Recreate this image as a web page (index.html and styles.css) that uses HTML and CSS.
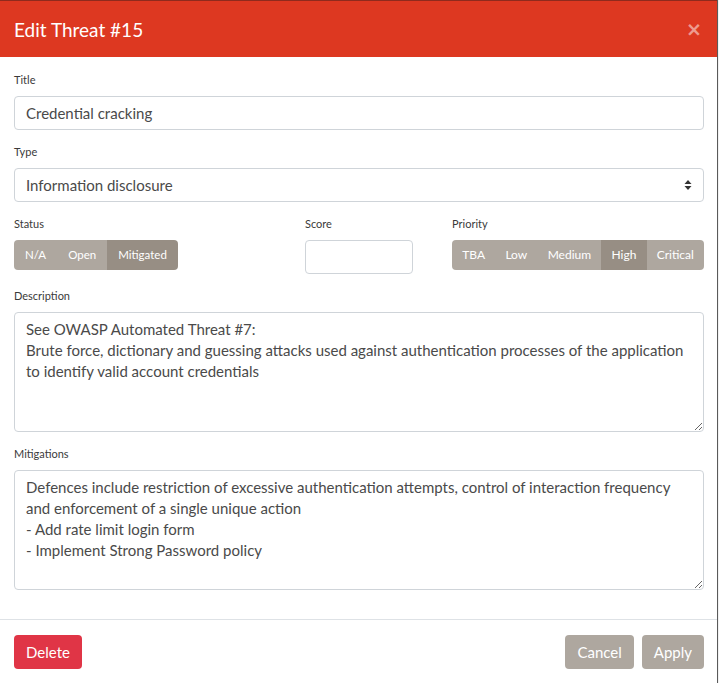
FILE: index.html
```html
<!DOCTYPE html>
<html>
<head>
<meta charset="utf-8">
<link rel="stylesheet" href="styles.css">
</head>
<body>
<div class="modal">
  <div class="modal-header">
    <h5 class="modal-title">Edit Threat #15</h5>
    <button class="close" type="button">&times;</button>
  </div>
  <div class="modal-body">
    <div class="form-group">
      <label class="lbl">Title</label>
      <input class="form-control" type="text" value="Credential cracking">
    </div>
    <div class="form-group">
      <label class="lbl">Type</label>
      <select class="form-control select">
        <option>Information disclosure</option>
      </select>
    </div>
    <div class="form-group row3">
      <div class="col">
        <label class="lbl">Status</label>
        <div class="btn-group">
          <button class="gbtn">N/A</button>
          <button class="gbtn">Open</button>
          <button class="gbtn active">Mitigated</button>
        </div>
      </div>
      <div class="col">
        <label class="lbl">Score</label>
        <input class="form-control score" type="text" value="">
      </div>
      <div class="col">
        <label class="lbl">Priority</label>
        <div class="btn-group wide">
          <button class="gbtn">TBA</button>
          <button class="gbtn">Low</button>
          <button class="gbtn">Medium</button>
          <button class="gbtn active">High</button>
          <button class="gbtn">Critical</button>
        </div>
      </div>
    </div>
    <div class="form-group">
      <label class="lbl">Description</label>
      <textarea class="form-control area">See OWASP Automated Threat #7:
Brute force, dictionary and guessing attacks used against authentication processes of the application to identify valid account credentials</textarea>
    </div>
    <div class="form-group">
      <label class="lbl">Mitigations</label>
      <textarea class="form-control area">Defences include restriction of excessive authentication attempts, control of interaction frequency and enforcement of a single unique action
- Add rate limit login form
- Implement Strong Password policy</textarea>
    </div>
  </div>
  <div class="modal-footer">
    <button class="btn btn-danger">Delete</button>
    <div class="right">
      <button class="btn btn-secondary">Cancel</button>
      <button class="btn btn-secondary">Apply</button>
    </div>
  </div>
</div>
</body>
</html>
```

FILE: styles.css
```css
* { box-sizing: border-box; }
html, body { margin: 0; padding: 0; }
body {
  background: #f1f1f1;
  font-family: Lato, "Open Sans", sans-serif;
  color: #333;
  width: 719px;
  height: 683px;
  overflow: hidden;
}
.modal {
  width: 718px;
  background: #fff;
  border-right: 1px solid #5a5a5a;
}
.modal-header {
  height: 57px;
  background: #dd3821;
  border-top: 1px solid #8f2a1d;
  display: flex;
  align-items: center;
  justify-content: space-between;
  padding: 0 15px 0 14px;
}
.modal-title {
  margin: 0;
  font-size: 19px;
  font-weight: 400;
  color: #fff;
  line-height: 1;
}
.close {
  border: 0;
  background: transparent;
  padding: 0;
  color: rgba(255,255,255,0.5);
  font-size: 19px;
  font-weight: 700;
  line-height: 1;
  font-family: "DejaVu Sans", sans-serif;
}
.modal-body {
  padding: 15px 13px 15px 14px;
}
.form-group { margin-bottom: 14px; }
.lbl {
  display: block;
  font-size: 11px;
  line-height: 16px;
  margin-bottom: 8px;
  color: #3a3a3a;
}
.form-control {
  display: block;
  width: 100%;
  height: 34px;
  border: 1px solid #cfd4d9;
  border-radius: 4px;
  padding: 5px 11px;
  font-family: Lato, "Open Sans", sans-serif;
  font-size: 15px;
  line-height: 21px;
  color: #4a4a4a;
  background: #fff;
  outline: none;
}
.select {
  -webkit-appearance: none;
  appearance: none;
  background-image: url("data:image/svg+xml;utf8,<svg xmlns='http://www.w3.org/2000/svg' width='8' height='10' viewBox='0 0 8 10'><path d='M4 0L7.5 4H0.5Z M4 10L0.5 6H7.5Z' fill='%23333'/></svg>");
  background-repeat: no-repeat;
  background-position: right 11px center;
}
.row3 {
  display: grid;
  grid-template-columns: 291px 147px 1fr;
}
.score { width: 108px; }
.btn-group {
  display: inline-flex;
  border-radius: 4px;
  overflow: hidden;
}
.btn-group.wide { display: flex; width: 252px; }
.gbtn {
  height: 30px;
  border: 0;
  margin: 0;
  padding: 0 11px 1px;
  background: #aea79f;
  color: #fff;
  font-family: Lato, "Open Sans", sans-serif;
  font-size: 11.5px;
}
.btn-group.wide .gbtn { flex: 1 1 auto; padding: 0 8px 1px; font-size: 12px; }
.gbtn.active { background: #978e84; }
.area {
  height: 120px;
  padding-top: 6px;
  resize: vertical;
}
.modal-footer {
  border-top: 1px solid #dee2e6;
  padding: 15px 13px 15px 14px;
  display: flex;
  justify-content: space-between;
}
.right { display: flex; gap: 8px; }
.btn {
  height: 34px;
  border: 0;
  border-radius: 4px;
  padding: 0 12px;
  color: #fff;
  font-family: Lato, "Open Sans", sans-serif;
  font-size: 15px;
}
.btn-danger { background: #e03546; }
.btn-secondary { background: #aea79f; }
```
